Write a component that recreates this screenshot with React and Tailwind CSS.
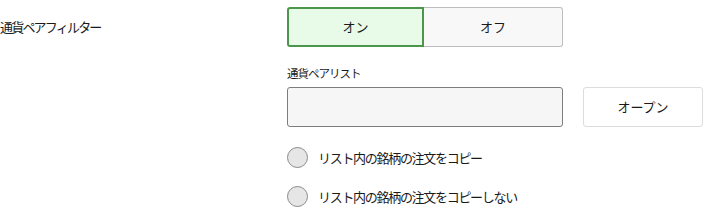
import React from "react";

const font = { fontFamily: '"Noto Sans CJK JP", "Noto Sans", sans-serif' };

const Radio = ({ label }) => (
  <label className="flex items-center h-[21px]">
    <span className="w-[21px] h-[21px] rounded-full border border-[#8a8a8a] bg-[#e6e6e6]" />
    <span className="ml-[10px] text-[13px] text-[#1a1a1a] tracking-[-1.3px]">{label}</span>
  </label>
);

export default function App() {
  return (
    <div className="w-[713px] h-[218px] bg-white relative" style={font}>
      <div className="flex pt-[7px]">
        <div className="w-[287px] flex items-center h-[40px] text-[13px] text-[#1a1a1a] tracking-[-1.8px]">
          通貨ペアフィルター
        </div>
        <div className="flex w-[276px] h-[40px]">
          <button className="w-[137px] h-full bg-[#e8fbe8] border-2 border-[#4c964c] rounded-l-[3px] text-[13px] text-[#1a1a1a]">
            オン
          </button>
          <button className="flex-1 h-full bg-[#f8f8f8] border border-l-0 border-[#bdbdbd] rounded-r-[3px] text-[13px] text-[#1a1a1a]">
            オフ
          </button>
        </div>
      </div>
      <div className="ml-[287px] mt-[19px]">
        <div className="text-[11.5px] text-[#1a1a1a] tracking-[-1px] h-[14px] leading-[14px]">通貨ペアリスト</div>
        <div className="flex mt-[7px] gap-[20px]">
          <div className="w-[276px] h-[40px] bg-[#f6f6f6] border border-[#7d7d7d] rounded-[3px]" />
          <button className="w-[120px] h-[40px] bg-white border border-[#dcdcdc] rounded-[3px] text-[13px] text-[#1a1a1a]">
            オープン
          </button>
        </div>
        <div className="flex flex-col gap-[18px] mt-[20px]">
          <Radio label="リスト内の銘柄の注文をコピー" />
          <Radio label="リスト内の銘柄の注文をコピーしない" />
        </div>
      </div>
    </div>
  );
}
